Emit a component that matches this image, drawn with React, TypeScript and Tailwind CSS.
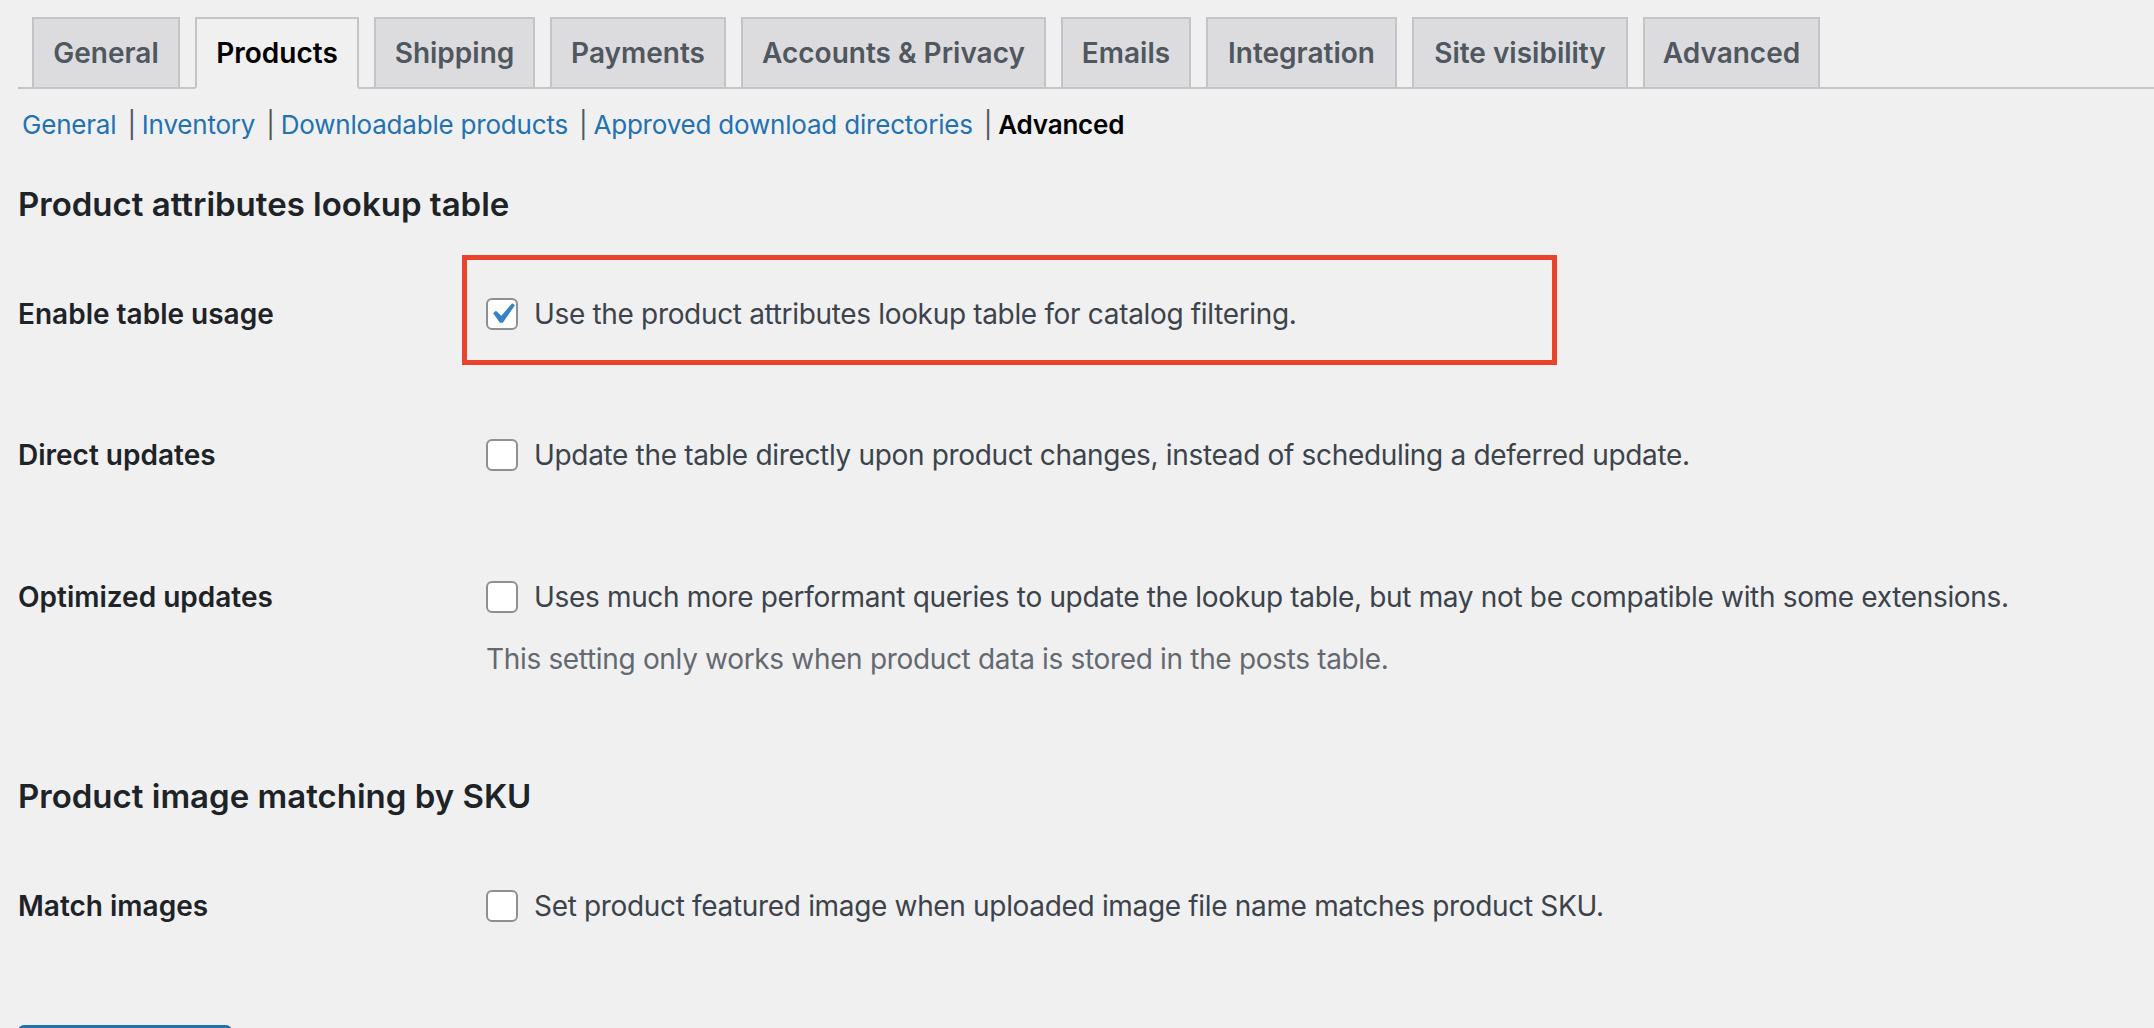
import React from 'react';

const tabs = [
  { label: 'General', w: 'w-[148px]' },
  { label: 'Products', w: 'w-[164px]', active: true },
  { label: 'Shipping', w: 'w-[161px]' },
  { label: 'Payments', w: 'w-[176px]' },
  { label: 'Accounts & Privacy', w: 'w-[305px]' },
  { label: 'Emails', w: 'w-[130px]' },
  { label: 'Integration', w: 'w-[191px]' },
  { label: 'Site visibility', w: 'w-[216px]' },
  { label: 'Advanced', w: 'w-[177px]' },
];

const sections = ['General', 'Inventory', 'Downloadable products', 'Approved download directories'];

function Checkbox({ checked }: { checked?: boolean }) {
  return (
    <span className="flex h-[32px] w-[32px] shrink-0 items-center justify-center rounded-[6px] border-2 border-[#8c8f94] bg-white">
      {checked && (
        <svg viewBox="0 0 20 20" className="h-[42px] w-[42px] shrink-0">
          <path d="M14.83 4.89l1.34.94-5.81 8.38H9.02L5.78 9.67l1.34-1.25 2.57 2.4z" fill="#3582c4" />
        </svg>
      )}
    </span>
  );
}

function Row({ label, className, children }: { label: string; className: string; children: React.ReactNode }) {
  return (
    <div className={`flex ${className}`}>
      <div className="w-[468px] shrink-0 text-[28px] font-semibold leading-[36px] text-[#1d2327]">{label}</div>
      <div className="flex flex-col">{children}</div>
    </div>
  );
}

function Option({ checked, text }: { checked?: boolean; text: string }) {
  return (
    <label className="flex h-[36px] items-center gap-[16px] text-[28px] leading-[36px] tracking-[-0.33px] text-[#3c434a]">
      <Checkbox checked={checked} />
      <span>{text}</span>
    </label>
  );
}

export default function App() {
  return (
    <div className="h-[1028px] overflow-hidden bg-[#f0f0f1] pl-[18px] font-['Inter','Liberation_Sans',sans-serif]">
      <nav className="flex gap-[15px] border-b-2 border-[#c3c4c7] pl-[14px] pt-[17px]">
        {tabs.map((t) => (
          <a
            key={t.label}
            className={
              t.active
                ? `-mb-[2px] flex h-[72px] ${t.w} items-center justify-center border-2 border-[#c3c4c7] border-b-[#f0f0f1] bg-[#f0f0f1] text-[28px] font-semibold text-black`
                : `-mb-[2px] flex h-[72px] ${t.w} items-center justify-center border-2 border-[#c3c4c7] bg-[#dcdcde] text-[28px] font-semibold text-[#50575e]`
            }
          >
            {t.label}
          </a>
        ))}
      </nav>

      <ul className="mt-[18px] flex pl-[4px] text-[26px] leading-[36px] tracking-[-0.2px]">
        {sections.map((s) => (
          <li key={s}>
            <a className="text-[#2271b1]">{s}</a>
            <span className="ml-[11px] mr-[6px] text-[#50575e]">|</span>
          </li>
        ))}
        <li className="font-semibold text-black">Advanced</li>
      </ul>

      <h2 className="mt-[41px] text-[33px] font-semibold leading-[40px] text-[#1d2327]">Product attributes lookup table</h2>

      <Row label="Enable table usage" className="mt-[72px]">
        <div className="relative">
          <Option checked text="Use the product attributes lookup table for catalog filtering." />
          <span className="absolute -left-[24px] -top-[41px] h-[110px] w-[1095px] border-[5px] border-[#e9442b]" />
        </div>
      </Row>

      <Row label="Direct updates" className="mt-[105px]">
        <Option text="Update the table directly upon product changes, instead of scheduling a deferred update." />
      </Row>

      <Row label="Optimized updates" className="mt-[106px]">
        <Option text="Uses much more performant queries to update the lookup table, but may not be compatible with some extensions." />
        <p className="mt-[26px] text-[28px] leading-[36px] tracking-[-0.33px] text-[#646970]">
          This setting only works when product data is stored in the posts table.
        </p>
      </Row>

      <h2 className="mt-[99px] text-[33px] font-semibold leading-[40px] text-[#1d2327]">Product image matching by SKU</h2>

      <Row label="Match images" className="mt-[72px]">
        <Option text="Set product featured image when uploaded image file name matches product SKU." />
      </Row>

      <div className="mt-[101px] h-[64px] w-[214px] shrink-0 rounded-[6px] border-2 border-[#2271b1] bg-[#2271b1]" aria-label="Save changes" />
    </div>
  );
}
